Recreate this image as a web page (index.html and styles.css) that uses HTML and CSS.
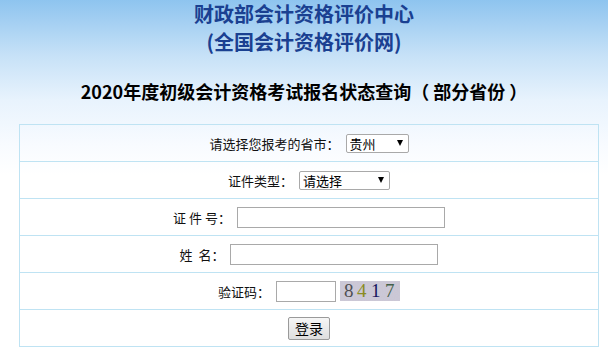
FILE: index.html
```html
<!DOCTYPE html>
<html lang="zh-CN">
<head>
<meta charset="utf-8">
<title>2020年度初级会计资格考试报名状态查询</title>
<link rel="stylesheet" href="styles.css">
</head>
<body>
<div class="top">
  <h1 class="org">财政部会计资格评价中心<br>(全国会计资格评价网)</h1>
  <h2 class="title">2020年度初级会计资格考试报名状态查询（ 部分省份 ）</h2>
</div>
<table class="form">
  <tr><td><span class="lbl">请选择您报考的省市：</span><span class="sel sel-prov"><select><option>贵州</option></select></span></td></tr>
  <tr><td><span class="lbl">证件类型：</span><span class="sel sel-type"><select><option>请选择</option></select></span></td></tr>
  <tr><td><span class="lbl">证&nbsp;件&nbsp;号：</span><input class="txt txt-long" type="text"></td></tr>
  <tr><td><span class="lbl">姓&nbsp;&nbsp;名：</span><input class="txt txt-long" type="text"></td></tr>
  <tr><td><span class="lbl">验证码：</span><input class="txt txt-code" type="text"><span class="captcha"><svg width="60" height="20" viewBox="0 0 60 20">
    <defs>
      <filter id="noise" x="0" y="0" width="100%" height="100%">
        <feTurbulence type="fractalNoise" baseFrequency="0.9" numOctaves="2" seed="4" result="n"/>
        <feColorMatrix in="n" type="matrix" values="0 0 0 0 0.6  0 0 0 0 0.58  0 0 0 0 0.7  0 0 0 1.8 -0.5"/>
      </filter>
    </defs>
    <rect width="60" height="20" fill="#cbc7d3"/>
    <rect width="60" height="20" filter="url(#noise)"/>
    <text x="4" y="16" class="cd cd1">8</text>
    <text x="17" y="16" class="cd cd2">4</text>
    <text x="31" y="16" class="cd cd3">1</text>
    <text x="45" y="16" class="cd cd4">7</text>
  </svg></span></td></tr>
  <tr><td><button class="btn" type="button">登录</button></td></tr>
</table>
</body>
</html>
```
FILE: styles.css
```css
html, body {
  margin: 0;
  padding: 0;
}
body {
  background: #fff linear-gradient(to bottom, #8ec4ef 0px, #c6e1f7 55px, #e8f3fd 100px, #f8fbff 145px, #ffffff 175px) no-repeat;
  background-size: 100% 175px;
  font-family: "Noto Sans CJK SC", "Liberation Sans", sans-serif;
  color: #111;
  height: 360px;
  overflow: hidden;
}
.top {
  text-align: center;
}
.org {
  margin: 0;
  padding-top: 0;
  font-size: 20px;
  line-height: 28px;
  font-weight: bold;
  color: #1a4091;
  letter-spacing: 0;
}
.title {
  margin: 23px 0 0;
  font-size: 18px;
  line-height: 24px;
  font-weight: bold;
  color: #000;
}
.form {
  margin: 21px 0 0 19px;
  width: 580px;
  border-collapse: collapse;
  font-size: 13px;
}
.form td {
  border: 1px solid #bfe3f3;
  height: 36px;
  padding: 0;
  text-align: center;
  vertical-align: middle;
}
.lbl {
  vertical-align: middle;
  margin-right: 6px;
}
.sel {
  position: relative;
  display: inline-block;
  vertical-align: middle;
}
.sel select {
  -webkit-appearance: none;
  appearance: none;
  display: block;
  margin: 0;
  border: 1px solid #a9a9a9;
  border-radius: 2px;
  background: #fff;
  font-family: "Noto Sans CJK SC", sans-serif;
  font-size: 13px;
  color: #000;
  padding: 0 0 0 3px;
  line-height: 16px;
  text-align: left;
}
.sel::after {
  content: "";
  position: absolute;
  right: 6px;
  top: 6px;
  border-left: 3.5px solid transparent;
  border-right: 3.5px solid transparent;
  border-top: 6px solid #000;
  pointer-events: none;
}
.sel-prov select {
  width: 63px;
  height: 19px;
}
.sel-type select {
  width: 91px;
  height: 19px;
}
.txt {
  box-sizing: border-box;
  height: 21px;
  border: 1px solid #a9a9a9;
  margin: 0;
  padding: 0 2px;
  vertical-align: middle;
  background: #fff;
}
.txt-long {
  width: 208px;
}
.txt-code {
  width: 60px;
}
.captcha {
  display: inline-block;
  vertical-align: middle;
  margin-left: 4px;
  height: 20px;
}
.captcha svg {
  display: block;
}
.cd {
  font-family: "Liberation Serif", serif;
  font-size: 19px;
}
.cd1 { fill: #4e4e52; }
.cd2 { fill: #8a8c22; }
.cd3 { fill: #16165e; }
.cd4 { fill: #43604a; }
.btn {
  box-sizing: border-box;
  width: 42px;
  height: 23px;
  margin: 0;
  padding: 0;
  border: 1px solid #9a9a9a;
  border-radius: 2px;
  background: linear-gradient(to bottom, #f6f6f6, #dedede);
  font-family: "Noto Sans CJK SC", sans-serif;
  font-size: 14px;
  line-height: 21px;
  color: #000;
  vertical-align: middle;
}
```
